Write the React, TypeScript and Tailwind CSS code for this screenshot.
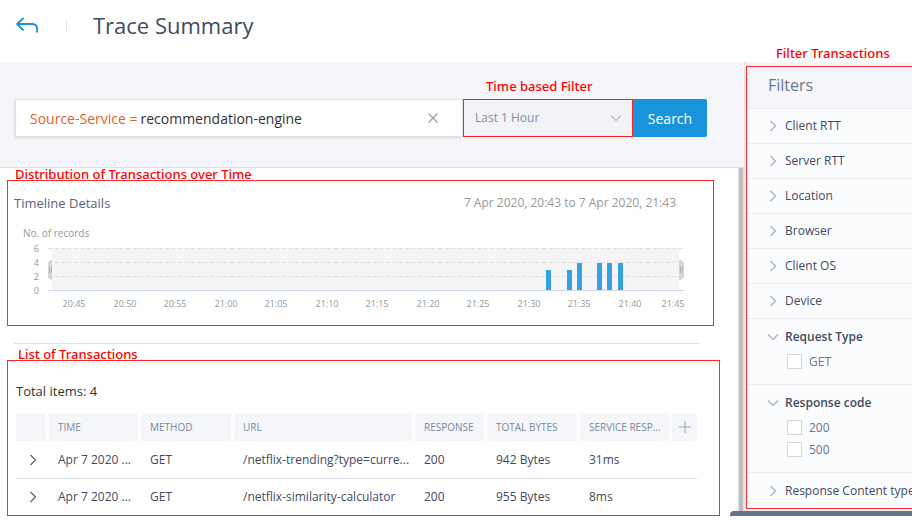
import type { ReactNode } from "react";

const FILTERS = ["Client RTT", "Server RTT", "Location", "Browser", "Client OS", "Device"];

const ROWS = [
  { time: "Apr 7 2020 ...", method: "GET", url: "/netflix-trending?type=curre...", response: "200", bytes: "942 Bytes", service: "31ms" },
  { time: "Apr 7 2020 ...", method: "GET", url: "/netflix-similarity-calculator", response: "200", bytes: "955 Bytes", service: "8ms" },
];

const BARS = [
  { x: 532, value: 3 },
  { x: 553, value: 3 },
  { x: 563, value: 4 },
  { x: 583, value: 4 },
  { x: 593, value: 4 },
  { x: 604, value: 4 },
];

const TICKS = [
  { x: 60, label: "20:45" },
  { x: 111, label: "20:50" },
  { x: 161, label: "20:55" },
  { x: 212, label: "21:00" },
  { x: 262, label: "21:05" },
  { x: 313, label: "21:10" },
  { x: 363, label: "21:15" },
  { x: 414, label: "21:20" },
  { x: 464, label: "21:25" },
  { x: 515, label: "21:30" },
  { x: 565, label: "21:35" },
  { x: 616, label: "21:40" },
  { x: 659, label: "21:45" },
];

function Chevron({ down = false, className }: { down?: boolean; className: string }) {
  return (
    <svg viewBox="0 0 12 12" fill="none" stroke="currentColor" strokeWidth="1.2" className={className} aria-hidden="true">
      <path d={down ? "M1 3.5 6 8.5 11 3.5" : "M3.5 1 8.5 6 3.5 11"} />
    </svg>
  );
}

function Note({ className, children }: { className: string; children: ReactNode }) {
  return <p className={`absolute font-['Noto_Sans',sans-serif] text-[13px] leading-4 font-medium whitespace-nowrap text-[#ff0000] ${className}`}>{children}</p>;
}

function TimelineChart() {
  return (
    <svg viewBox="0 0 684 67" className="block w-full" role="img" aria-label="Number of records over time">
      <rect x="38" y="5" width="627" height="42" fill="#f5f5f5" />
      {[6, 4, 2, 0].map((n, i) => (
        <text key={n} x="25" y={9 + i * 14} fontSize="9" textAnchor="end" fill="#8e9aa3">{n}</text>
      ))}
      {[5.5, 19.5, 33.5].map((y) => (
        <path key={y} d={`M34 ${y}H670`} stroke="#e0e0e0" strokeDasharray="4 2.5" />
      ))}
      {BARS.map((b) => (
        <rect key={b.x} x={b.x} y={b.value === 4 ? 20 : 27} width="5" height={b.value === 4 ? 27 : 20} fill="#35a0e2" />
      ))}
      <path d="M34 47.5H670" stroke="#ced6e8" />
      <path d="M38 17V37C35.500 37 34 35 34 33V21C34 19 35.500 17 38 17Z" fill="#d6d6d6" />
      <path d="M35.500 24V30M37.500 24V30" stroke="#aaa" strokeWidth=".8" />
      <path d="M665 17V37C668 37 670 35 670 33V21C670 19 668 17 665 17Z" fill="#d6d6d6" />
      <path d="M666.500 24V30M668.500 24V30" stroke="#aaa" strokeWidth=".8" />
      {TICKS.map((t) => (
        <text key={t.label} x={t.x} y="64" fontSize="9" textAnchor="middle" fill="#8e9aa3">{t.label}</text>
      ))}
    </svg>
  );
}

function FilterGroup({ title, options }: { title: string; options: string[] }) {
  return (
    <div role="group" aria-label={title} className="border-b border-[#ebedf1] pb-2">
      <button type="button" className="flex h-[35px] w-full items-center gap-[6px] pl-5 text-[12px] font-semibold whitespace-nowrap text-[#434a60]">
        <Chevron down className="size-3 shrink-0 text-[#a9aeb8]" />
        {title}
      </button>
      {options.map((o) => (
        <label key={o} className="flex h-[22px] items-start gap-[7px] pl-10 text-[12px] leading-4 text-[#68758c]">
          <input type="checkbox" className="size-[15px] appearance-none border border-[#d4d6da] bg-white" />
          {o}
        </label>
      ))}
    </div>
  );
}

export default function App() {
  return (
    <div className="relative overflow-hidden bg-white font-['Open_Sans','Noto_Sans',sans-serif] text-[#434a60]">
      <header className="flex h-[62px] items-center pb-3 pl-4">
        <button type="button" aria-label="Back" className="text-[#1a8fdc]">
          <svg width="22" height="16" viewBox="0 0 22 16" fill="none" stroke="currentColor" strokeWidth="1.8" className="block" aria-hidden="true">
            <path d="M7.500 1 1 7 7.500 13.500M1 7H16C19.500 7 21 9 21 12V15.500" />
          </svg>
        </button>
        <span className="ml-7 h-3 w-px bg-[#dfe2e8]" />
        <h1 className="ml-[26px] text-[22px] leading-8">Trace Summary</h1>
      </header>

      <div className="flex">
        <main className="min-w-0 flex-1">
          <form className="relative flex border-b border-[#dcdfe5] bg-[#f5f6fa] pt-[37px] pr-[37px] pb-[30px] pl-[15px]" onSubmit={(e) => e.preventDefault()}>
            <div className="flex h-[38px] min-w-0 flex-1 items-center border border-[#dfe1e6] bg-white pl-[14px] text-[14px] shadow-sm">
              <label htmlFor="query" className="whitespace-nowrap text-[#e2612c]">Source-Service =</label>
              <input id="query" defaultValue="recommendation-engine" className="ml-[3px] min-w-0 flex-1 text-[#333] outline-none" />
              <button type="button" aria-label="Clear" className="mr-6 text-[#9a9a9a]">
                <svg viewBox="0 0 10 10" stroke="currentColor" strokeWidth="1.2" className="size-[10px]" aria-hidden="true">
                  <path d="M.5 .5 9.500 9.500M9.500 .5 .5 9.500" />
                </svg>
              </button>
            </div>
            <div className="relative w-[170px]">
              <select aria-label="Time range" className="h-[38px] w-full appearance-none border border-[#ff2020] bg-[#f2f3f7] pl-[11px] text-[12px] text-[#8490a5]">
                <option>Last 1 Hour</option>
              </select>
              <Chevron down className="pointer-events-none absolute top-[13px] right-[11px] size-3 text-[#b3b8c2]" />
              <Note className="bottom-[43px] left-[23px]">Time based Filter</Note>
            </div>
            <button type="submit" className="h-[38px] w-[74px] rounded-r-xs bg-[#1a93dd] text-[14px] text-white">Search</button>
          </form>

          <div className="flex">
            <div className="min-w-0 flex-1 pl-[7px]">
              <section className="relative mt-3 mr-6 h-[146px] border border-[#ff2a2a] pt-3 pr-[7px] pl-[6px]">
                <Note className="bottom-[143px] left-[7px]">Distribution of Transactions over Time</Note>
                <div className="flex items-center justify-between pr-[30px] leading-5">
                  <h2 className="text-[13px] text-[#5a6478]">Timeline Details</h2>
                  <p className="text-[12px] text-[#999]">7 Apr 2020, 20:43 to 7 Apr 2020, 21:43</p>
                </div>
                <p className="mt-3 pl-[9px] text-[10px] leading-4 text-[#8e9aa3]">No. of records</p>
                <div className="mt-[2px] pr-2">
                  <TimelineChart />
                </div>
              </section>

              <hr className="mt-[17px] mr-[38px] ml-[7px] border-[#e1e1e1]" />

              <section className="relative mt-4 mr-[18px] border border-[#ff2a2a] pr-[22px] pl-2">
                <Note className="-top-[15px] left-[10px]">List of Transactions</Note>
                <p className="pt-5 text-[13px] leading-5 text-[#333]">Total items: 4</p>
                <table className="mt-3 w-full table-fixed border-separate border-spacing-0 text-left text-[12px]">
                  <thead>
                    <tr className="h-7 text-[10px] text-[#7b879c] *:border-r-[3px] *:border-white *:bg-[#f5f6fa] *:pl-[9px] *:font-normal *:whitespace-nowrap">
                      <th className="w-[33px]" aria-label="Expand" />
                      <th className="w-[92px]">TIME</th>
                      <th className="w-[93px]">METHOD</th>
                      <th>URL</th>
                      <th className="w-[72px]">RESPONSE</th>
                      <th className="w-[93px]">TOTAL BYTES</th>
                      <th className="w-[92px]">SERVICE RESP...</th>
                      <th className="w-[25px] border-r-0! pl-0!">
                        <button type="button" aria-label="Add column" className="mx-auto block text-[#9ba5b5]">
                          <svg viewBox="0 0 12 12" stroke="currentColor" className="size-3" aria-hidden="true">
                            <path d="M6 0V12M0 6H12" />
                          </svg>
                        </button>
                      </th>
                    </tr>
                  </thead>
                  <tbody>
                    {ROWS.map((r) => (
                      <tr key={r.url} className="h-[38px] whitespace-nowrap *:border-b *:border-[#dfe2e8] *:pl-[9px] last:h-9 last:*:border-b-0">
                        <td>
                          <button type="button" aria-label="Expand row" className="ml-[2px] block text-[#56647c]">
                            <Chevron className="size-3" />
                          </button>
                        </td>
                        <td>{r.time}</td>
                        <td>{r.method}</td>
                        <td>{r.url}</td>
                        <td>{r.response}</td>
                        <td>{r.bytes}</td>
                        <td colSpan={2}>{r.service}</td>
                      </tr>
                    ))}
                  </tbody>
                </table>
              </section>
            </div>
            <div className="w-[6px] border-x border-[#e0e0e0] bg-[#bdbdbd]" />
          </div>
        </main>

        <aside className="relative w-[168px] shrink-0 border-l-2 border-[#e4e6eb] bg-[#f5f6fa] pt-1">
          <Note className="-top-[17px] left-[30px]">Filter Transactions</Note>
          <div className="border-y border-l border-[#ff2a2a] bg-[#fbfcfe]">
            <h2 className="border-b border-[#ebedf1] bg-[#f5f6fa] pt-[6px] pb-[11px] pl-[21px] text-[16px] leading-6 text-[#6a768c]">Filters</h2>
            {FILTERS.map((f) => (
              <button key={f} type="button" className="flex h-[35px] w-full items-center gap-[6px] border-b border-[#ebedf1] pl-5 text-[12px] whitespace-nowrap">
                <Chevron className="size-3 shrink-0 text-[#a9aeb8]" />
                {f}
              </button>
            ))}
            <FilterGroup title="Request Type" options={["GET"]} />
            <FilterGroup title="Response code" options={["200", "500"]} />
            <button type="button" className="flex h-[35px] w-full items-center gap-[6px] pl-5 text-[12px] whitespace-nowrap">
              <Chevron className="size-3 shrink-0 text-[#a9aeb8]" />
              Response Content type
            </button>
          </div>
        </aside>
      </div>
      <div className="absolute right-0 bottom-0 h-[5px] w-[182px] rounded-tl bg-[#68768c]" />
    </div>
  );
}
